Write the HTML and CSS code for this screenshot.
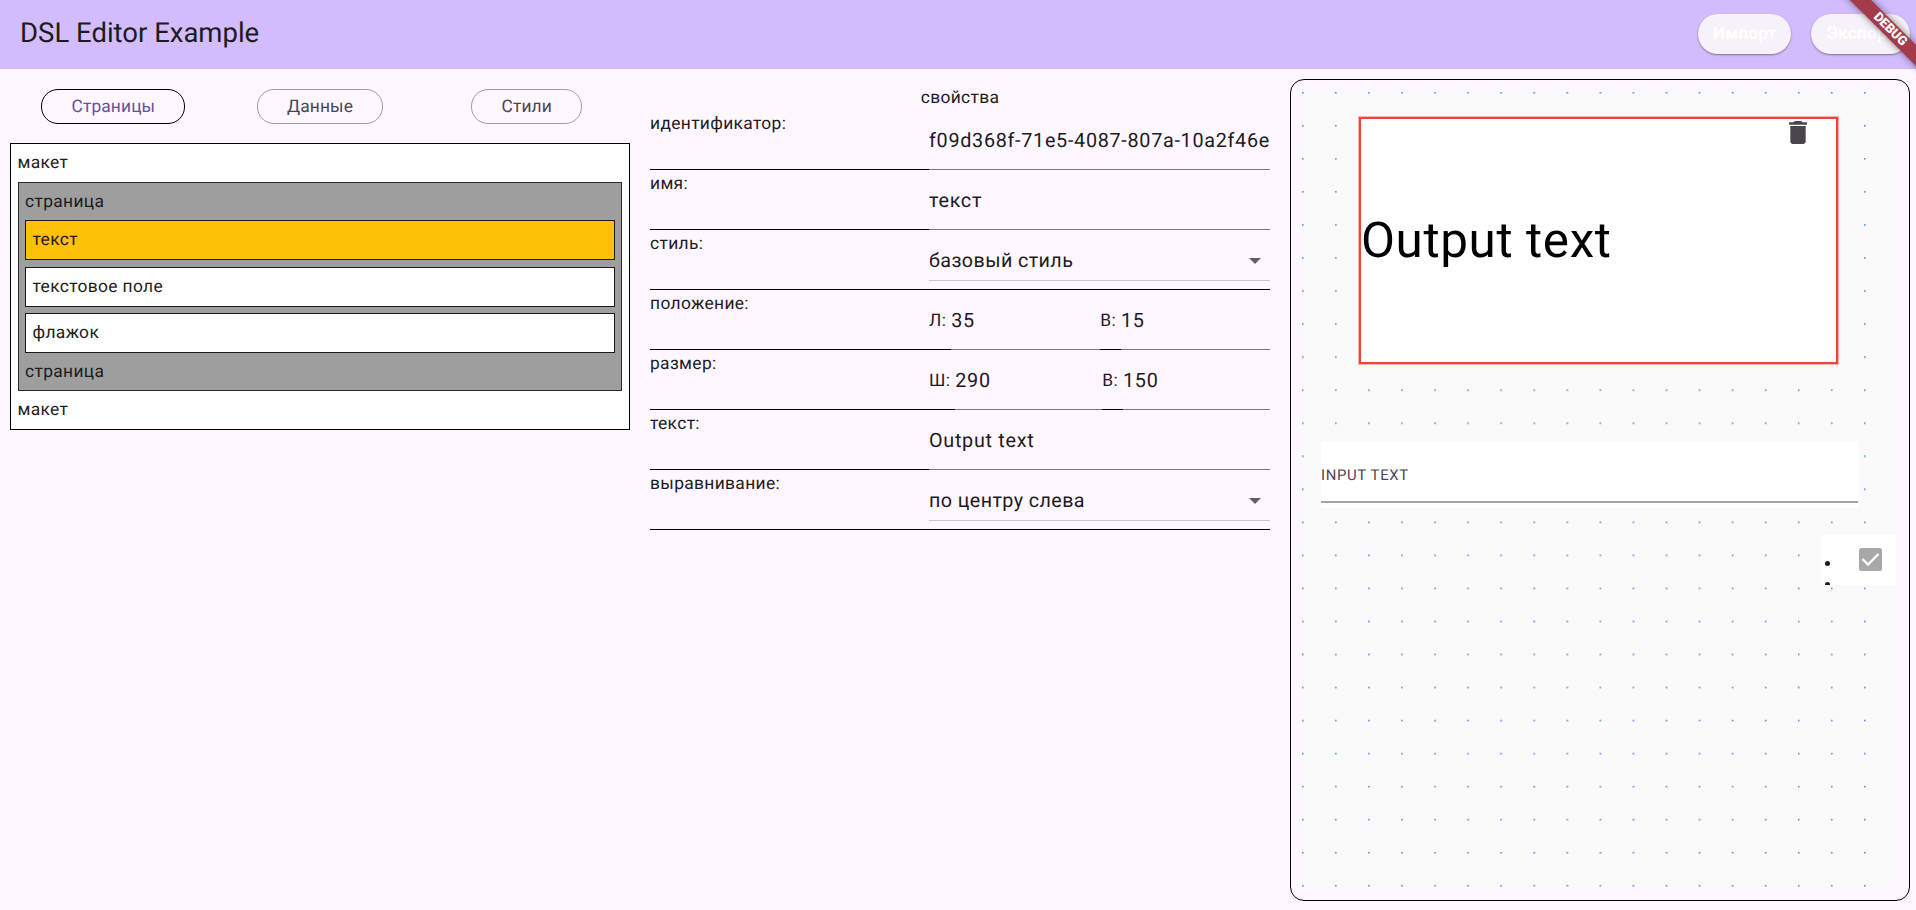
FILE: index.html
```html
<!DOCTYPE html>
<html lang="ru">
<head>
<meta charset="utf-8">
<title>DSL Editor Example</title>
<link rel="stylesheet" href="styles.css">
</head>
<body>
<header class="appbar">
  <h1 class="title">DSL Editor Example</h1>
  <div class="actions">
    <button class="pill">Импорт</button>
    <button class="pill">Экспорт</button>
  </div>
</header>
<div class="debug"><span class="debug-text">DEBUG</span></div>
<main class="columns">
  <section class="tree-col">
    <nav class="tabs">
      <div class="tab"><button class="chip chip-active">Страницы</button></div>
      <div class="tab"><button class="chip">Данные</button></div>
      <div class="tab"><button class="chip">Стили</button></div>
    </nav>
    <div class="tree">
      <div class="node-label root-label">макет</div>
      <div class="page">
        <div class="node-label">страница</div>
        <div class="items">
          <div class="item item-selected">текст</div>
          <div class="item">текстовое поле</div>
          <div class="item">флажок</div>
        </div>
        <div class="node-label">страница</div>
      </div>
      <div class="node-label root-label">макет</div>
    </div>
  </section>
  <section class="props">
    <h2 class="props-title">свойства</h2>
    <div class="row"><div class="label">идентификатор:</div><div class="field line"><span class="value">f09d368f-71e5-4087-807a-10a2f46e</span></div></div>
    <div class="row"><div class="label">имя:</div><div class="field line"><span class="value">текст</span></div></div>
    <div class="row"><div class="label">стиль:</div><div class="field select"><span class="value">базовый стиль</span><svg class="arrow" viewBox="0 0 12 6"><path d="M0 0h12L6 6z"/></svg></div></div>
    <div class="row"><div class="label">положение:</div><div class="field pair"><span class="prefix">Л:</span><span class="value line num">35</span><span class="prefix">В:</span><span class="value line num">15</span></div></div>
    <div class="row"><div class="label">размер:</div><div class="field pair"><span class="prefix">Ш:</span><span class="value line num">290</span><span class="prefix">В:</span><span class="value line num">150</span></div></div>
    <div class="row"><div class="label">текст:</div><div class="field line"><span class="value">Output text</span></div></div>
    <div class="row"><div class="label">выравнивание:</div><div class="field select"><span class="value">по центру слева</span><svg class="arrow" viewBox="0 0 12 6"><path d="M0 0h12L6 6z"/></svg></div></div>
  </section>
  <section class="preview">
    <div class="canvas">
      <svg class="dots" width="595" height="796">
        <defs><pattern id="grid" width="33.06" height="33.04" patternUnits="userSpaceOnUse"><rect x="0" y="0" width="1.6" height="1.5" fill="#448aff"/></pattern></defs>
        <rect width="570" height="796" fill="url(#grid)"/>
      </svg>
      <div class="widget output">
        <span class="output-text">Output text</span>
        <svg class="trash" viewBox="5 3 14 18"><path d="M6 19c0 1.100.9 2 2 2h8c1.100 0 2-.9 2-2V7H6v12zM19 4h-3.500l-1-1h-5l-1 1H5v2h14V4z"/></svg>
      </div>
      <div class="widget input"><span class="input-text">INPUT TEXT</span></div>
      <div class="widget check">
        <div class="bullets"><i class="bullet"></i><i class="bullet"></i></div>
        <svg class="checkbox" viewBox="0 0 23 23"><rect width="23" height="23" rx="2.500" fill="#a8a7aa"/><path d="M3.500 11l5.500 5.500L19.500 6" fill="none" stroke="#fef7ff" stroke-width="2.400"/></svg>
      </div>
    </div>
  </section>
</main>
</body>
</html>
```
FILE: styles.css
```css
* { box-sizing: border-box; }
body {
  margin: 0;
  height: 910px;
  overflow: hidden;
  position: relative;
  background: #fef7ff;
  color: #1d1b20;
  font: 17.4px/24.600px Roboto, sans-serif;
  letter-spacing: 0.34px;
  text-rendering: geometricPrecision;
}
h1, h2 { margin: 0; font-weight: 400; }
button { font: inherit; letter-spacing: inherit; text-rendering: inherit; cursor: pointer; }
.appbar {
  height: 69px;
  padding: 0 6px 0 20px;
  display: flex;
  align-items: center;
  justify-content: space-between;
  background: #d2bcfd;
}
.title { font-size: 27.500px; line-height: 34px; letter-spacing: 0; margin-top: -3px; }
.actions { display: flex; gap: 20px; margin-top: -2px; }
.pill {
  height: 40px;
  padding: 1px 15px 0;
  border: 0;
  border-radius: 20px;
  background: #f7f1f9;
  color: #fff;
  font-weight: 500;
  letter-spacing: 0.12px;
  box-shadow: 0 1px 2px rgba(0, 0, 0, .4);
}
.debug {
  position: absolute;
  z-index: 3;
  right: 0;
  top: 0;
  width: 100px;
  height: 100px;
  overflow: hidden;
}
.debug-text {
  position: absolute;
  left: 4px;
  top: 21.500px;
  width: 140px;
  height: 15px;
  transform: rotate(45deg);
  background: #a33b4a;
  color: #fff;
  font-size: 12.900px;
  font-weight: 900;
  line-height: 15px;
  letter-spacing: 0;
  text-align: center;
  box-shadow: 0 0 7px rgba(0, 0, 0, .5);
}
.columns {
  height: 841px;
  padding: 10px 6px 9px 10px;
  display: grid;
  grid-template-columns: 620px 620px 620px;
  gap: 20px;
}
.tabs { display: grid; grid-template-columns: repeat(3, 1fr); padding-top: 10px; }
.tab { display: flex; justify-content: center; }
.chip {
  height: 35px;
  padding: 2px 29px 0;
  border: 1px solid #9e9e9e;
  border-radius: 17px;
  background: none;
  color: #49454f;
  letter-spacing: 0.12px;
}
.chip-active { border-color: #000; color: #67509c; }
.tree {
  margin-top: 19px;
  height: 287px;
  padding: 0 7px;
  border: 1px solid #000;
  background: #fff;
}
.node-label { height: 37px; line-height: 39px; }
.root-label { height: 38px; margin-left: -.6px; }
.page { height: 209px; border: 1px solid #2b2b2b; padding: 0 6px; background: #9e9e9e; }
.items { display: flex; flex-direction: column; gap: 6.500px; }
.item {
  height: 40px;
  padding-left: 6.600px;
  border: 1px solid #1b1b1b;
  background: #fff;
  line-height: 39px;
}
.item-selected { background: #ffc107; }
.props-title { height: 20px; padding-top: 6px; font-size: inherit; line-height: 24.600px; text-align: center; }
.props { padding-top: 1px; }
.props .row:first-of-type { margin-top: 10px; }
.row { height: 60px; display: flex; border-bottom: 1px solid #000; }
.label { width: 279px; padding-top: 2px; }
.field { width: 341px; height: 60px; position: relative; padding-top: 19px; white-space: nowrap; }
.value { font-size: 19.800px; letter-spacing: 0.7px; }
.select .value { font-size: 19.700px; letter-spacing: 0.42px; }
.line { border-bottom: 1px solid #7b757f; }
.select { height: 51px; border-bottom: 1px solid #cac5cc; display: flex; justify-content: space-between; }
.arrow { width: 12px; height: 6px; margin: 9px 9px 0 0; fill: #616161; }
.pair { display: flex; padding-top: 0; }
.prefix { padding-top: 19px; padding-right: 5px; }
.num { flex: 1; height: 60px; padding-top: 19px; }
.preview { height: 822px; border: 1px solid #000; border-radius: 14px; padding: 12px 11px; }
.canvas { position: relative; width: 595px; height: 796px; background: #fafafa; }
.dots { display: block; }
.widget { position: absolute; background: #fff; }
.output {
  left: 57px;
  top: 25px;
  width: 479px;
  height: 247px;
  border: 2px solid #f44336;
  box-shadow: 0 0 0 1px rgba(244, 67, 54, .4);
  display: flex;
  align-items: center;
}
.output-text { color: #000; font-size: 49.400px; letter-spacing: 0.62px; padding-top: 1px; }
.trash { position: absolute; right: 29px; top: 2px; width: 18px; height: 23px; fill: #49454f; }
.input { left: 19px; top: 349px; width: 537px; height: 67px; }
.input-text { display: block; height: 62px; padding-top: 22px; border-bottom: 2px solid #a5a2a7; color: #49454f; font-size: 14.900px; letter-spacing: .65px; }
.check { left: 519px; top: 443px; width: 75px; height: 50px; overflow: hidden; display: flex; }
.bullets { width: 38px; padding: 26px 0 0 4px; display: flex; flex-direction: column; gap: 16px; }
.bullet { flex: none; width: 5px; height: 5px; border-radius: 50%; background: #1d1b20; }
.checkbox { width: 23px; height: 23px; margin-top: 13px; }
```
